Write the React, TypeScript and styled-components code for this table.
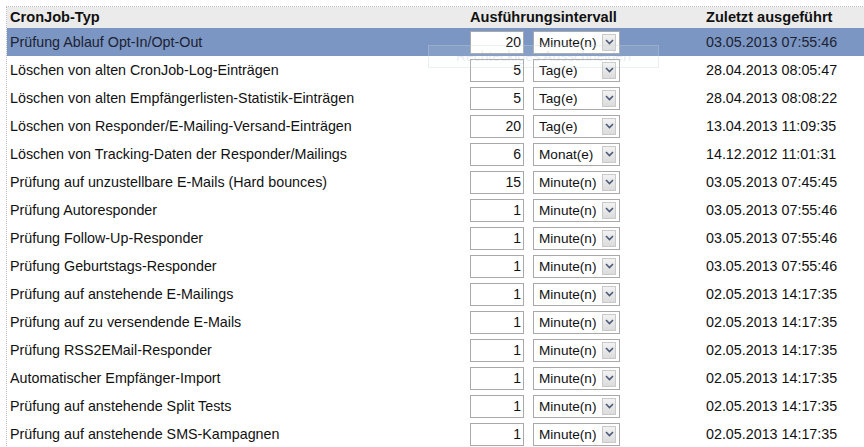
import React from "react";
import styled, { createGlobalStyle } from "styled-components";

const Global = createGlobalStyle`
  html, body { margin: 0; padding: 0; background: #ffffff; overflow: hidden; }
  body { font-family: "Liberation Sans", Arial, sans-serif; }
`;

const Page = styled.div`
  position: relative;
  width: 864px;
  height: 447px;
  overflow: hidden;
  padding: 6px 0 0 6px;
  box-sizing: border-box;
`;

const Frame = styled.div`
  border-top: 1px dotted #b8b8b8;
  border-left: 1px dotted #b8b8b8;
  width: 900px;
`;

const Table = styled.table`
  border-collapse: collapse;
  width: 900px;
  table-layout: fixed;
  font-family: "Liberation Sans", Arial, sans-serif;
`;

const HeadRow = styled.tr`
  background: #ebebeb;
  height: 21px;
`;

const Th = styled.th<{ $pad: number }>`
  text-align: left;
  font-size: 14.6px;
  font-weight: bold;
  color: #111111;
  padding: 0 0 0 ${(p) => p.$pad}px;
  vertical-align: middle;
  line-height: 21px;
  white-space: nowrap;
`;

const Row = styled.tr<{ $selected?: boolean }>`
  height: 28px;
  background: ${(p) => (p.$selected ? "#7b96c2" : "#ffffff")};
  color: ${(p) => (p.$selected ? "#1c2233" : "#111111")};
`;

const Td = styled.td<{ $pad: number }>`
  font-size: 14.3px;
  padding: 0 0 0 ${(p) => p.$pad}px;
  vertical-align: middle;
  white-space: nowrap;
`;

const Interval = styled.div`
  display: flex;
  align-items: center;
  gap: 9px;
`;

const NumBox = styled.div`
  width: 50px;
  height: 21px;
  border: 1px solid #a9a9a9;
  background: #ffffff;
  text-align: right;
  font-size: 14px;
  line-height: 21px;
  padding-right: 2px;
  color: #111111;
`;

const Select = styled.div`
  width: 77px;
  height: 21px;
  border: 1px solid #a9a9a9;
  background: #ffffff;
  display: flex;
  align-items: center;
  justify-content: space-between;
  padding: 0 3px 0 5px;
  font-size: 13.6px;
  color: #111111;
`;

const Arrow = styled.span`
  width: 12px;
  height: 15px;
  border: 1px solid #c9c9c9;
  background: linear-gradient(#f2f2f2, #dcdcdc);
  display: flex;
  align-items: center;
  justify-content: center;
`;

const Ghost = styled.div`
  position: absolute;
  left: 428px;
  top: 45px;
  width: 229px;
  height: 21px;
  border: 1px solid rgba(200, 205, 215, 0.3);
  background: rgba(240, 242, 246, 0.1);
  color: rgba(150, 160, 185, 0.2);
  font-size: 14px;
  text-align: center;
  line-height: 21px;
  pointer-events: none;
`;

type Job = { name: string; n: number; unit: string; last: string };

const jobs: Job[] = [
  { name: "Prüfung Ablauf Opt-In/Opt-Out", n: 20, unit: "Minute(n)", last: "03.05.2013 07:55:46" },
  { name: "Löschen von alten CronJob-Log-Einträgen", n: 5, unit: "Tag(e)", last: "28.04.2013 08:05:47" },
  { name: "Löschen von alten Empfängerlisten-Statistik-Einträgen", n: 5, unit: "Tag(e)", last: "28.04.2013 08:08:22" },
  { name: "Löschen von Responder/E-Mailing-Versand-Einträgen", n: 20, unit: "Tag(e)", last: "13.04.2013 11:09:35" },
  { name: "Löschen von Tracking-Daten der Responder/Mailings", n: 6, unit: "Monat(e)", last: "14.12.2012 11:01:31" },
  { name: "Prüfung auf unzustellbare E-Mails (Hard bounces)", n: 15, unit: "Minute(n)", last: "03.05.2013 07:45:45" },
  { name: "Prüfung Autoresponder", n: 1, unit: "Minute(n)", last: "03.05.2013 07:55:46" },
  { name: "Prüfung Follow-Up-Responder", n: 1, unit: "Minute(n)", last: "03.05.2013 07:55:46" },
  { name: "Prüfung Geburtstags-Responder", n: 1, unit: "Minute(n)", last: "03.05.2013 07:55:46" },
  { name: "Prüfung auf anstehende E-Mailings", n: 1, unit: "Minute(n)", last: "02.05.2013 14:17:35" },
  { name: "Prüfung auf zu versendende E-Mails", n: 1, unit: "Minute(n)", last: "02.05.2013 14:17:35" },
  { name: "Prüfung RSS2EMail-Responder", n: 1, unit: "Minute(n)", last: "02.05.2013 14:17:35" },
  { name: "Automatischer Empfänger-Import", n: 1, unit: "Minute(n)", last: "02.05.2013 14:17:35" },
  { name: "Prüfung auf anstehende Split Tests", n: 1, unit: "Minute(n)", last: "02.05.2013 14:17:35" },
  { name: "Prüfung auf anstehende SMS-Kampagnen", n: 1, unit: "Minute(n)", last: "02.05.2013 14:17:35" },
];

const Chevron = () => (
  <svg width="9" height="6" viewBox="0 0 9 6">
    <path d="M1 1 L4.5 4.5 L8 1" fill="none" stroke="#4a5a78" strokeWidth="1.6" />
  </svg>
);

export default function App() {
  return (
    <>
      <Global />
      <Page>
        <Frame>
          <Table>
            <colgroup>
              <col style={{ width: 459 }} />
              <col style={{ width: 234 }} />
              <col />
            </colgroup>
            <thead>
              <HeadRow>
                <Th $pad={3}>CronJob-Typ</Th>
                <Th $pad={4}>Ausführungsintervall</Th>
                <Th $pad={6}>Zuletzt ausgeführt</Th>
              </HeadRow>
            </thead>
            <tbody>
              {jobs.map((j, i) => (
                <Row key={i} $selected={i === 0}>
                  <Td $pad={3}>{j.name}</Td>
                  <Td $pad={4}>
                    <Interval>
                      <NumBox>{j.n}</NumBox>
                      <Select>
                        <span>{j.unit}</span>
                        <Arrow>
                          <Chevron />
                        </Arrow>
                      </Select>
                    </Interval>
                  </Td>
                  <Td $pad={6}>{j.last}</Td>
                </Row>
              ))}
            </tbody>
          </Table>
        </Frame>
        <Ghost>Rechteckiges Ausschneiden</Ghost>
      </Page>
    </>
  );
}
